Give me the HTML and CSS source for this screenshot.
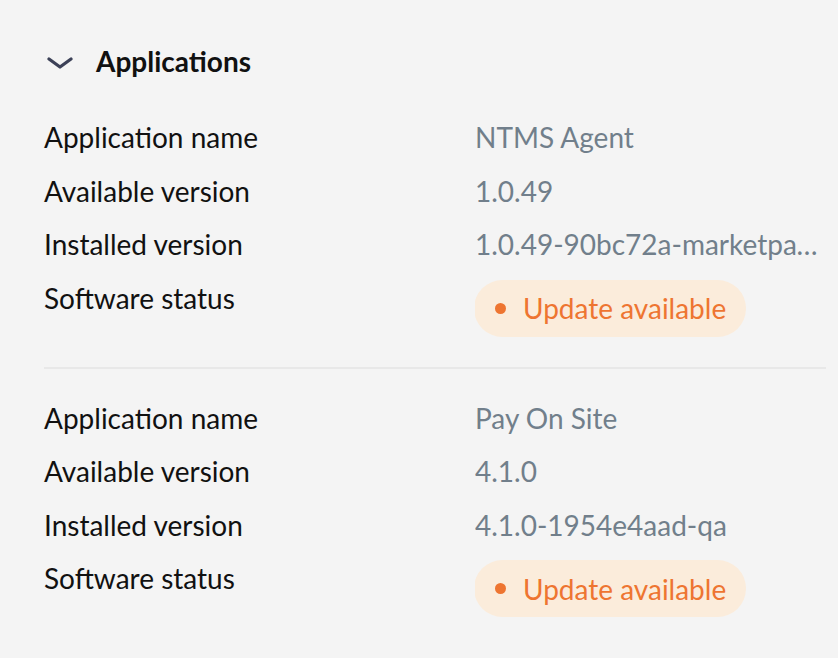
FILE: index.html
```html
<!DOCTYPE html>
<html>
<head>
    <title>Applications</title>
    <link rel="stylesheet" href="styles.css">
    <meta name="viewport" content="width=device-width, initial-scale=1" />
    <meta charset="UTF-8">
</head>
<body>
    <div class="section">
        <div class="section-header">
            <svg class="chevron" width="26" height="12" viewBox="0 0 26 12">
                <path d="M2 2 L13 10 L24 2" fill="none" stroke="#3c4157" stroke-width="3.2" stroke-linecap="round" stroke-linejoin="round"/>
            </svg>
            <h2>Applications</h2>
        </div>

        <div class="app-list">
            <div class="app">
                <div class="row">
                    <div class="label">Application name</div>
                    <div class="value">NTMS Agent</div>
                </div>
                <div class="row">
                    <div class="label">Available version</div>
                    <div class="value">1.0.49</div>
                </div>
                <div class="row">
                    <div class="label">Installed version</div>
                    <div class="value">1.0.49-90bc72a-marketpay-release</div>
                </div>
                <div class="row">
                    <div class="label">Software status</div>
                    <div class="value">
                        <span class="status-pill"><span class="dot"></span>Update available</span>
                    </div>
                </div>
            </div>

            <div class="app">
                <div class="row">
                    <div class="label">Application name</div>
                    <div class="value">Pay On Site</div>
                </div>
                <div class="row">
                    <div class="label">Available version</div>
                    <div class="value">4.1.0</div>
                </div>
                <div class="row">
                    <div class="label">Installed version</div>
                    <div class="value">4.1.0-1954e4aad-qa</div>
                </div>
                <div class="row">
                    <div class="label">Software status</div>
                    <div class="value">
                        <span class="status-pill"><span class="dot"></span>Update available</span>
                    </div>
                </div>
            </div>
        </div>
    </div>
</body>
</html>
```

FILE: styles.css
```css
body {
    font-family: Lato, 'Noto Sans', sans-serif;
    background-color: #f4f4f4;
    color: #111111;
    margin: 0;
    padding: 0;
}

.section {
    padding: 43px 12px 0 44px;
}

.section-header {
    display: flex;
    align-items: center;
    height: 36px;
    margin-bottom: 40px;
}

.chevron {
    margin-left: 3px;
    margin-right: 23px;
    margin-top: 3px;
}

.section-header h2 {
    margin: 0;
    font-size: 28px;
    line-height: 36px;
    font-weight: 700;
}

.app {
    display: flex;
    flex-direction: column;
    gap: 17.5px;
}

.app + .app {
    border-top: 2px solid #e8e8e8;
    margin-top: 30px;
    padding-top: 31px;
}

.row {
    display: grid;
    grid-template-columns: 431px 1fr;
    align-items: start;
    font-size: 28px;
    line-height: 36px;
}

.label {
    color: #111111;
}

.value {
    color: #717f8b;
    white-space: nowrap;
    overflow: hidden;
    text-overflow: ellipsis;
    min-width: 0;
    padding-right: 8px;
}

.status-pill {
    display: inline-flex;
    align-items: center;
    background-color: #fbecdb;
    color: #ee7531;
    border-radius: 29px;
    padding: 10.5px 20px 10.5px 21px;
    margin-left: -1px;
}

.dot {
    width: 11px;
    height: 11px;
    border-radius: 50%;
    background-color: #ee7531;
    margin-right: 17px;
}
```
